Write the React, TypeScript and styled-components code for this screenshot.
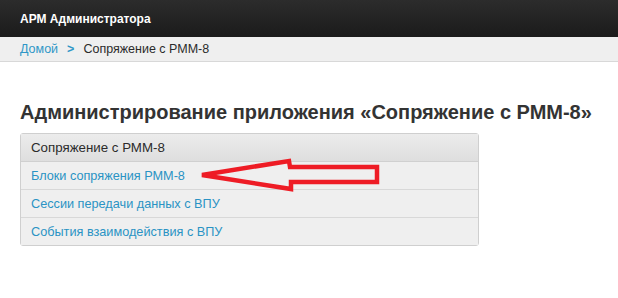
import styled, { createGlobalStyle } from 'styled-components';

const GlobalStyle = createGlobalStyle`
    body {
        margin: 0;
        background: #fff;
        font-family: "Liberation Sans", Arial, sans-serif;
        color: #333;
    }
`

const TopBar = styled.div`
    height: 37px;
    background: linear-gradient(#2c2c2c, #1b1b1b);
    color: #fff;
    font-size: 12px;
    font-weight: bold;
    display: flex;
    align-items: center;
    padding-left: 20px;
`
const Breadcrumb = styled.div`
    height: 24px;
    background: #efefef;
    border-bottom: 1px solid #d8d8d8;
    display: flex;
    align-items: center;
    padding-left: 20px;
    font-size: 12.5px;
    color: #2b2b2b;
`
const CrumbLink = styled.a`
    color: #2f97c7;
    text-decoration: none;
`
const CrumbSep = styled.span`
    color: #2f97c7;
    font-weight: bold;
    margin: 0 9px 0 9px;
`
const Content = styled.div`
    padding: 0 20px;
`
const Title = styled.h1`
    margin: 38px 0 9px;
    font-size: 20px;
    font-weight: bold;
    color: #333;
    line-height: 24px;
`
const Panel = styled.div`
    position: relative;
    width: 457px;
    border: 1px solid #cfcfcf;
    border-radius: 3px;
    background: #efefef;
`
const PanelHeader = styled.div`
    height: 27px;
    display: flex;
    align-items: center;
    padding-left: 10px;
    font-size: 13.3px;
    color: #2b2b2b;
    background: linear-gradient(#ececec, #dedede);
    border-bottom: 1px solid #d0d0d0;
`
const PanelRow = styled.a<{ $last?: boolean }>`
    height: 27px;
    display: flex;
    align-items: center;
    padding-left: 10px;
    font-size: 12.7px;
    color: #2a93c4;
    text-decoration: none;
    border-bottom: ${(p) => (p.$last ? 'none' : '1px solid #d8d8d8')};
    background: #efefef;
`
const Arrow = styled.svg`
    position: absolute;
    left: 178px;
    top: 22px;
    overflow: visible;
`

export default function App() {
    return (
        <>
            <GlobalStyle />
            <TopBar>АРМ Администратора</TopBar>
            <Breadcrumb>
                <CrumbLink href="#">Домой</CrumbLink>
                <CrumbSep>&gt;</CrumbSep>
                <span>Сопряжение с РММ-8</span>
            </Breadcrumb>
            <Content>
                <Title>Администрирование приложения «Сопряжение с РММ-8»</Title>
                <Panel>
                    <PanelHeader>Сопряжение с РММ-8</PanelHeader>
                    <PanelRow href="#">Блоки сопряжения РММ-8</PanelRow>
                    <PanelRow href="#">Сессии передачи данных с ВПУ</PanelRow>
                    <PanelRow href="#" $last>События взаимодействия с ВПУ</PanelRow>
                    {/* red arrow drawn over the list */}
                    <Arrow width="180" height="32">
                        <polygon
                            points="3,19 90,5 91,11 178,11 178,26 92,26 92,33"
                            fill="none"
                            stroke="#ee1c25"
                            strokeWidth="4.5"
                            strokeLinejoin="miter"
                        />
                    </Arrow>
                </Panel>
            </Content>
        </>
    );
}
